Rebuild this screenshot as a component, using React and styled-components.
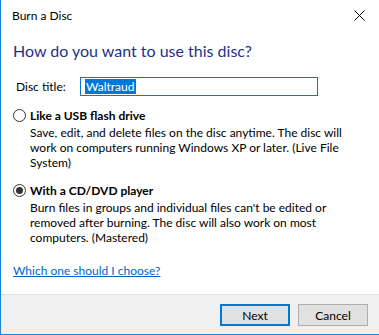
import React from "react";
import styled, { createGlobalStyle } from "styled-components";

const Global = createGlobalStyle`
  html, body { margin: 0; padding: 0; background: #fff; }
  body { font-family: Lato, "Noto Sans", sans-serif; }
  #root { width: 379px; height: 335px; }
`;

const Window = styled.div`
  box-sizing: border-box;
  width: 379px;
  height: 335px;
  border-left: 1px solid #1883d7;
  border-bottom: 1px solid #1883d7;
  display: flex;
  flex-direction: column;
  background: #fff;
  color: #000;
  font-size: 12px;
`;

const TitleBar = styled.div`
  height: 30px;
  display: flex;
  align-items: center;
  justify-content: space-between;
  padding: 0 11px 0 11px;
  flex: none;
`;

const Title = styled.span`
  font-size: 12px;
  color: #000;
`;

const Close = styled.svg`
  width: 11px;
  height: 11px;
  margin-right: 3px;
`;

const Content = styled.div`
  flex: 1;
  padding: 0 12px;
  display: flex;
  flex-direction: column;
`;

const Heading = styled.div`
  margin-top: 10px;
  font-size: 16px;
  line-height: 22px;
  color: #1e3287;
`;

const FieldRow = styled.div`
  margin-top: 15px;
  display: flex;
  align-items: center;
  height: 19px;
`;

const Label = styled.label`
  width: 64px;
  padding-left: 3px;
  font-size: 12px;
`;

const Input = styled.div`
  box-sizing: border-box;
  width: 238px;
  height: 19px;
  border: 1px solid #0078d7;
  display: flex;
  align-items: center;
  padding-left: 4px;
`;

const Selected = styled.span`
  background: #0078d7;
  color: #fff;
  line-height: 15px;
  padding: 0 1px;
`;

const Option = styled.div`
  margin-top: ${(p) => p.$gap}px;
  display: flex;
  flex-direction: column;
`;

const OptionHead = styled.div`
  display: flex;
  align-items: center;
  height: 15px;
  gap: 4px;
`;

const Radio = styled.span`
  box-sizing: border-box;
  width: 13px;
  height: 13px;
  border-radius: 50%;
  border: 1px solid #333;
  display: flex;
  align-items: center;
  justify-content: center;
  &::after {
    content: "";
    width: 7px;
    height: 7px;
    border-radius: 50%;
    background: ${(p) => (p.$checked ? "#333" : "transparent")};
  }
`;

const OptionTitle = styled.span`
  font-weight: bold;
  font-size: 12px;
  line-height: 15px;
`;

const Desc = styled.div`
  margin-top: 2px;
  padding-left: 17px;
  line-height: 15px;
  font-size: 12px;
  width: 318px;
`;

const Link = styled.a`
  margin-top: 18px;
  line-height: 15px;
  color: #0066cc;
  text-decoration: underline;
  align-self: flex-start;
  cursor: pointer;
`;

const Footer = styled.div`
  flex: none;
  height: 40px;
  border-top: 1px solid #dfdfdf;
  background: #f0f0f0;
  display: flex;
  justify-content: flex-end;
  align-items: flex-start;
  padding: 9px 11px 0 0;
  gap: 8px;
  box-sizing: border-box;
`;

const Button = styled.button`
  box-sizing: border-box;
  width: 70px;
  height: 22px;
  background: #e1e1e1;
  border: ${(p) => (p.$default ? "2px solid #0078d7" : "1px solid #adadad")};
  font-family: inherit;
  font-size: 12px;
  color: #000;
  padding: 0;
`;

export default function App() {
  return (
    <>
      <Global />
      <Window>
        <TitleBar>
          <Title>Burn a Disc</Title>
          <Close viewBox="0 0 11 11">
            <path d="M0.5 0.5 L10.5 10.5 M10.5 0.5 L0.5 10.5" stroke="#000" strokeWidth="1" fill="none" />
          </Close>
        </TitleBar>
        <Content>
          <Heading>How do you want to use this disc?</Heading>
          <FieldRow>
            <Label>Disc title:</Label>
            <Input>
              <Selected>Waltraud</Selected>
            </Input>
          </FieldRow>
          <Option $gap={12}>
            <OptionHead>
              <Radio />
              <OptionTitle>Like a USB flash drive</OptionTitle>
            </OptionHead>
            <Desc>
              Save, edit, and delete files on the disc anytime. The disc will work on computers running Windows XP or later. (Live File System)
            </Desc>
          </Option>
          <Option $gap={13}>
            <OptionHead>
              <Radio $checked />
              <OptionTitle>With a CD/DVD player</OptionTitle>
            </OptionHead>
            <Desc>
              Burn files in groups and individual files can't be edited or removed after burning. The disc will also work on most computers. (Mastered)
            </Desc>
          </Option>
          <Link>Which one should I choose?</Link>
        </Content>
        <Footer>
          <Button $default>Next</Button>
          <Button>Cancel</Button>
        </Footer>
      </Window>
    </>
  );
}
